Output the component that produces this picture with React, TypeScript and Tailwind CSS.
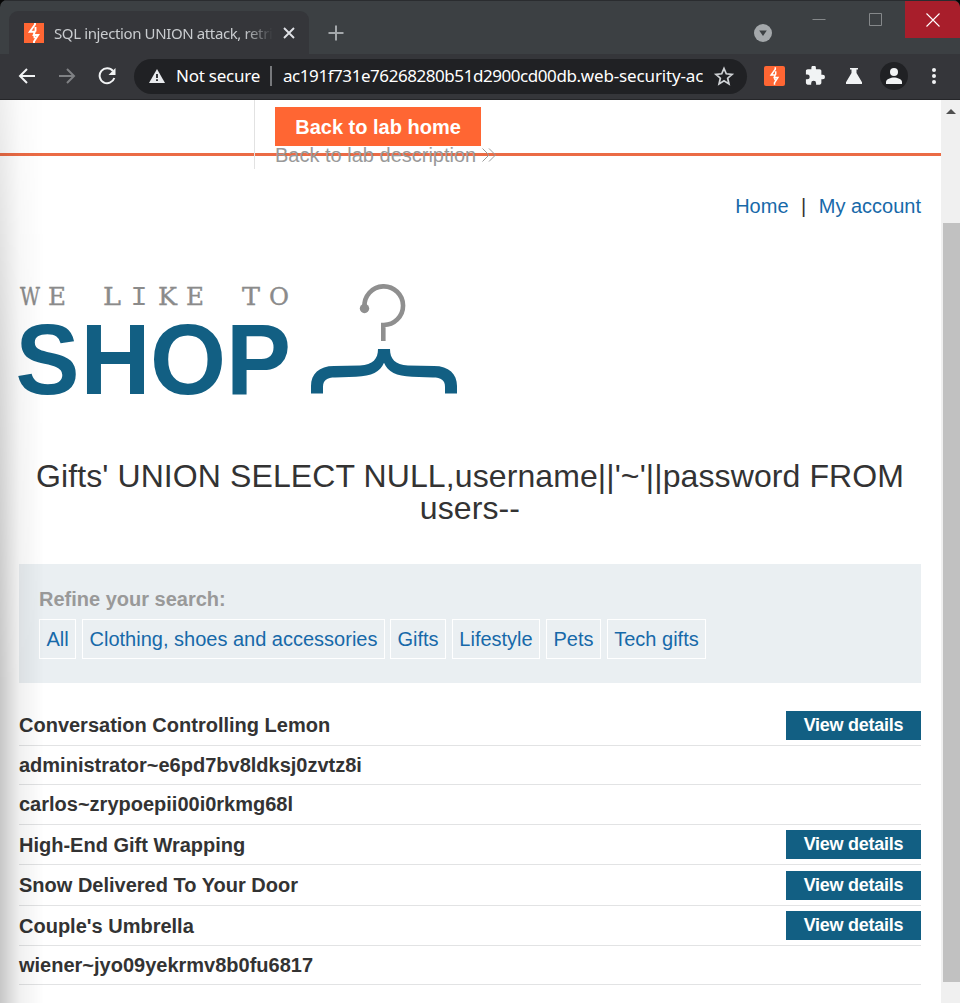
import type { ReactNode } from 'react';

const ARIAL = "font-['Liberation_Sans',Arial,sans-serif]";
const UI = "font-['Noto_Sans','Open_Sans',sans-serif]";

function Bolt({ className, viewBox = '0 0 20 20' }: { className: string; viewBox?: string }) {
  return (
    <svg viewBox={viewBox} className={className} fill="none">
      <path d="M11 -1v2.500L5.800 8.700h5L9.600 12h4.600L10 18.500V21M11.500 4v4.500M9.200 12.200h1.300v3" stroke="#fff" strokeWidth="1.900" />
    </svg>
  );
}

function TabStrip() {
  return (
    <div className="flex h-[54px] items-start border-t border-[#2a2c2f] bg-[#3c4043]">
      <div className="ml-[9px] mt-[10px] flex h-[43px] w-[300px] items-center rounded-t-[9px] bg-[#35363a] pl-[15px]">
        <Bolt className="h-5 w-5 shrink-0 bg-[#ff6633]" />
        <div className="ml-[10px] w-[219px] overflow-hidden whitespace-nowrap text-[15px] leading-[22px] tracking-[-0.38px] text-[#c9cccf] [mask-image:linear-gradient(to_right,black_190px,transparent_219px)]">
          SQL injection UNION attack, retrieving
        </div>
        <svg viewBox="0 0 12 12" className="ml-[10px] h-3 w-3" stroke="#dfe1e5" strokeWidth="1.9">
          <path d="M1 1l10 10M11 1L1 11" />
        </svg>
      </div>
      <svg viewBox="0 0 16 16" className="ml-[19px] mt-[24px] h-4 w-4" stroke="#a4a8ab" strokeWidth="2">
        <path d="M8 .5v15M.5 8h15" />
      </svg>
      <div className="flex-1" />
      <svg viewBox="0 0 18 18" className="mt-[23px] h-[18px] w-[18px]">
        <circle cx="9" cy="9" r="9" fill="#a4a8ab" />
        <path d="M5.2 6.5h7.6L9 12z" fill="#3c4043" />
      </svg>
      <svg viewBox="0 0 14 14" className="ml-[40px] mt-[12px] h-[14px] w-[14px]" stroke="#85888a">
        <path d="M.5 6.5h13" />
      </svg>
      <svg viewBox="0 0 14 14" className="ml-[43px] mt-[12px] h-[14px] w-[14px]" fill="none" stroke="#85888a">
        <path d="M.5.5h12v12H.5z" />
      </svg>
      <div className="ml-[22px] flex h-[37px] w-[55px] items-center justify-center rounded-tr-[6px] bg-[#a81e2b]">
        <svg viewBox="0 0 14 14" className="h-[14px] w-[14px]" stroke="#fff" strokeWidth="1.1">
          <path d="M.5.5l13 13M13.500.5l-13 13" />
        </svg>
      </div>
    </div>
  );
}

function Toolbar() {
  return (
    <div className="flex h-[46px] items-center border-b border-[#252629] bg-[#35363a] pb-px">
      <svg viewBox="0 0 18 16" className="ml-[18px] h-4 w-[18px]" fill="none" stroke="#f1f3f4" strokeWidth="2">
        <path d="M17 8H2M9 1L2 8l7 7" />
      </svg>
      <svg viewBox="0 0 18 16" className="ml-[22px] h-4 w-[18px]" fill="none" stroke="#7f8184" strokeWidth="2">
        <path d="M1 8h15M9 1l7 7-7 7" />
      </svg>
      <svg viewBox="0 0 18 18" className="ml-[22px] h-[18px] w-[18px]" fill="none">
        <path d="M15 4A7.500 7.500 0 1 0 16.300 11" stroke="#f1f3f4" strokeWidth="2" />
        <path d="M17.500 1v7h-7z" fill="#f1f3f4" />
      </svg>
      <div className="ml-[18px] flex h-[35px] w-[613px] items-center rounded-full bg-[#202124] pl-[15px] text-[17px] text-white">
        <svg viewBox="0 0 16 14" className="h-[14px] w-4">
          <path d="M8 0l8 14H0z" fill="#e8eaed" />
          <path d="M7.100 5h1.800v4H7.100zM7.100 10.300h1.800v1.700H7.100z" fill="#202124" />
        </svg>
        <span className="ml-[11px] w-[85px] whitespace-nowrap tracking-[-0.23px]">Not secure</span>
        <span className="ml-[9px] h-[20px] w-[2px] bg-[#77797c]" />
        <span className="ml-[11px] w-[420px] overflow-hidden whitespace-nowrap tracking-[-0.44px]">
          <span>ac191f731e76268280b51d2900cd00db</span>
          <span className="tracking-[-0.15px]">.web-security-academy.net</span>
        </span>
        <svg viewBox="0 0 24 24" className="ml-[10px] h-[22px] w-[22px]" fill="none" stroke="#d0d3d6" strokeWidth="1.900">
          <path d="M12 3.800l2.500 5.800 6.300.6-4.800 4.200 1.400 6.200L12 17.300l-5.400 3.300L8 14.400l-4.800-4.200 6.300-.6z" />
        </svg>
      </div>
      <Bolt viewBox="-3 -2.500 26 25" className="ml-[17px] h-5 w-[21px] rounded-[2px] bg-[#ff6633]" />
      <svg viewBox="1 1.500 22 22" className="ml-[20px] h-5 w-5" fill="#f1f3f4">
        <path d="M20.500 11H19V7c0-1.100-.9-2-2-2h-4V3.500a2.500 2.500 0 0 0-5 0V5H4c-1.100 0-2 .9-2 2v3.800h1.500a2.700 2.700 0 0 1 0 5.400H2V20c0 1.100.9 2 2 2h3.800v-1.500a2.700 2.700 0 0 1 5.400 0V22H17c1.100 0 2-.9 2-2v-4h1.500a2.500 2.500 0 0 0 0-5z" />
      </svg>
      <svg viewBox="0 0 16 16" className="ml-[21px] h-4 w-4" fill="#f1f3f4">
        <path d="M4 0h8v1.500h-1.500V5L16 14.200V16H0v-1.800L5.500 5V1.500H4z" />
      </svg>
      <svg viewBox="0 0 28 28" className="ml-[18px] h-7 w-7">
        <circle cx="14" cy="14" r="14" fill="#202124" />
        <circle cx="14" cy="10" r="4" fill="#f1f3f4" />
        <path d="M6 22v-2c0-3 5-4.500 8-4.500s8 1.500 8 4.500v2z" fill="#f1f3f4" />
      </svg>
      <svg viewBox="0 0 4 16" className="ml-[24px] h-4 w-1" fill="#f1f3f4">
        <circle cx="2" cy="2" r="2" />
        <circle cx="2" cy="8" r="2" />
        <circle cx="2" cy="14" r="2" />
      </svg>
    </div>
  );
}

const tagline: [string, number, number][] = [
  ['W', 20, 20], ['E', 48, 18], ['L', 103, 18], ['I', 130.500, 17],
  ['K', 158, 19], ['E', 186, 18], ['T', 242, 18], ['O', 269, 20],
];

function Logo() {
  return (
    <svg viewBox="0 280 460 120" className="mt-[62px] -ml-[19px] h-[120px] w-[460px] shrink-0">
      {tagline.map(([letter, x, width]) => (
        <text
          key={x}
          x={x}
          y="304.500"
          textLength={width}
          lengthAdjust="spacingAndGlyphs"
          fontFamily={letter === 'I' ? 'Liberation Mono' : 'DejaVu Serif'}
          fontSize={letter === 'I' ? 28 : 25}
          fill="#8b8b8b"
          stroke="#8b8b8b"
          strokeWidth={letter === 'I' ? 0 : 0.350}
        >
          {letter}
        </text>
      ))}
      <text x="15" y="393.500" fontFamily="Liberation Sans" fontWeight="700" fontSize="101" fill="#125f83">
        <tspan x="15.500" textLength="64" lengthAdjust="spacingAndGlyphs">S</tspan>
        <tspan x="80.500" textLength="70" lengthAdjust="spacingAndGlyphs">H</tspan>
        <tspan x="150" textLength="76" lengthAdjust="spacingAndGlyphs">O</tspan>
        <tspan x="226" textLength="65" lengthAdjust="spacingAndGlyphs">P</tspan>
      </text>
      <path d="M364.500 307a19.300 19.300 0 1 1 18.800 18v16" fill="none" stroke="#8f8f8f" strokeWidth="4.600" />
      <circle cx="364.500" cy="308.500" r="4.700" fill="#8f8f8f" />
      <path d="M378 349h12c0 10 5 15.500 18 16.500l26 .5c15 0 23 8 23 20v7.500h-12V387c0-7-4-9.500-12-9.500l-21-.7c-16-.8-24-4.800-28-14-4 9.200-12 13.200-28 14l-21 .7c-8 0-12 2.500-12 9.500v6.500h-12V386c0-12 8-20 23-20l26-.5c13-1 18-6.500 18-16.500z" fill="#125f83" />
    </svg>
  );
}

function Tag({ className, children }: { className: string; children: ReactNode }) {
  return (
    <a className={`flex h-10 items-center justify-center whitespace-nowrap border border-white ${className}`}>{children}</a>
  );
}

const rows: { name: string; height: string; details: boolean }[] = [
  { name: 'Conversation Controlling Lemon', height: 'h-[41px]', details: true },
  { name: 'administrator~e6pd7bv8ldksj0zvtz8i', height: 'h-[39px]', details: false },
  { name: 'carlos~zrypoepii00i0rkmg68l', height: 'h-[40px] pb-px', details: false },
  { name: 'High-End Gift Wrapping', height: 'h-[40px]', details: true },
  { name: 'Snow Delivered To Your Door', height: 'h-[41px]', details: true },
  { name: "Couple's Umbrella", height: 'h-[40px]', details: true },
  { name: 'wiener~jyo09yekrmv8b0fu6817', height: 'h-[39px]', details: false },
];

function Page() {
  return (
    <main className={`flex w-[941px] flex-col pl-[19px] pr-5 pb-4 text-[20px] text-[#333] ${ARIAL}`}>
      <header className="relative -ml-[19px] -mr-5 h-[69px] pl-[254px]">
        <div className="absolute left-0 top-[53px] h-[3px] w-[941px] bg-[#eb6b45]" />
        <div className="relative h-[69px] border-l border-[#e2e2e2] pl-5 pt-[7px]">
          <a className="flex h-[39px] w-[206px] items-center justify-center bg-[#ff6633] pt-px font-bold text-white">
            Back to lab home
          </a>
          <a className="-mt-[2px] flex h-[22px] items-center whitespace-nowrap text-[#999]">
            <span>Back to lab description</span>
            <svg viewBox="0 0 14 14" className="ml-[6px] h-[14px] w-[14px]" fill="none" stroke="#999">
              <path d="M.5.500 7 7l-6.500 6.500M7 .500 13.500 7 7 13.500" />
            </svg>
          </a>
        </div>
      </header>
      <nav className="mt-[25px] flex h-6 items-center justify-end text-[#1769a9]">
        <a>Home</a>
        <span className="mx-[12.500px] text-[#333]">|</span>
        <a>My account</a>
      </nav>
      <Logo />
      <h1 className="-mx-2 mt-[60px] h-[64px] text-center text-[32px] leading-8 tracking-[0.1px]">
        Gifts' UNION SELECT NULL,username||'~'||password FROM<br />users--
      </h1>
      <section className="mt-[40px] h-[119px] bg-[#eaeff2] pl-5 pt-[24px]">
        <div className="flex h-[22px] items-center font-bold text-[#999]">Refine your search:</div>
        <div className="mt-[9px] flex text-[#1769a9]">
          <Tag className="w-[37px]">All</Tag>
          <Tag className="ml-[6px] w-[303px]">Clothing, shoes and accessories</Tag>
          <Tag className="ml-[5px] w-[56px]">Gifts</Tag>
          <Tag className="ml-[6px] w-[88px]">Lifestyle</Tag>
          <Tag className="ml-[6px] w-[55px]">Pets</Tag>
          <Tag className="ml-[6px] w-[99px]">Tech gifts</Tag>
        </div>
      </section>
      <section className="mt-[22px]">
        {rows.map((row) => (
          <div key={row.name} className={`flex items-center justify-between border-b border-[#e2e3e4] font-bold ${row.height}`}>
            <span>{row.name}</span>
            {row.details && (
              <a className="flex h-[29px] w-[135px] items-center justify-center bg-[#125f83] text-[18px] tracking-[-0.25px] text-white">
                View details
              </a>
            )}
          </div>
        ))}
      </section>
    </main>
  );
}

export default function App() {
  return (
    <div className={`flex h-[1003px] w-[960px] flex-col overflow-hidden bg-[#050505] ${UI}`}>
      <div className="overflow-hidden rounded-t-[7px]">
        <TabStrip />
        <Toolbar />
      </div>
      <div className="relative flex flex-1 overflow-hidden bg-white">
        <Page />
        <div className="flex w-[19px] flex-col items-end bg-[#f0f0f0]">
          <svg viewBox="0 0 10 5" className="mr-[4px] mt-[9px] h-[5px] w-[10px]"><path d="M0 5l5-5 5 5z" fill="#505050" /></svg>
          <div className="mt-[109px] h-[759px] w-[17px] bg-[#c1c1c1]" />
        </div>
        <div className="pointer-events-none absolute inset-y-0 left-0 w-[44px] bg-[linear-gradient(to_right,rgb(0_0_0/0.22),rgb(0_0_0/0.06)_45%,transparent)] [mask-image:linear-gradient(to_bottom,rgb(0_0_0/0.3),rgb(0_0_0/0.7)_30%,black_65%)]" />
      </div>
    </div>
  );
}
